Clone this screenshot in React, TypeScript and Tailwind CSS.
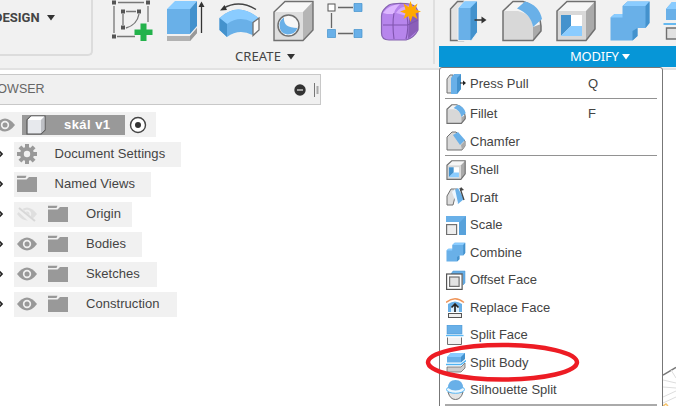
import type { ReactNode } from "react";

const B = "#69b0e8";
const D = "#4492cd";
const L = "#8accff";
const G = "#d8d8d8";
const K = "#707070";

function Tool({ x, w = 54, children }: { x: number; w?: number; children: ReactNode }) {
  return (
    <svg width={w} height="46" viewBox={`${x} 0 ${w} 46`} className="block shrink-0">
      {children}
    </svg>
  );
}

function CreateTools() {
  return (
    <div className="flex h-[46px]">
      <Tool x={105}>
        <path d="M114 6V33M118 2.500H144M148 6V22M117 36.500H135" stroke="#777" strokeWidth="1.3" fill="none" />
        <path d="M123 14V25M126 11.500H136M139 14Q137 25 126 28" stroke="#777" strokeWidth="1.3" fill="none" />
        {[[114, 2.5], [148, 2.5], [114, 36.5], [123, 11.5], [139, 11.5], [123, 27.5]].map(([a, b]) => (
          <rect key={`${a}-${b}`} x={a - 2} y={b - 2} width="4" height="4" fill="#555" />
        ))}
        <path d="M140.500 23.500h6v6h6v5.500h-6v6h-6v-6h-6v-5.500h6z" fill="#23b24b" />
      </Tool>
      <Tool x={159}>
        <path d="M167 36H190L197 28V33L190 41H167Z" fill="#b2b2b2" />
        <path d="M190 36L197 28V33L190 41Z" fill="#999" />
        <path d="M167 9L175 1H197L190 9Z" fill={L} />
        <path d="M190 9L197 1V26L190 34Z" fill={D} />
        <path d="M167 9H190V34H167Z" fill={B} />
        <path d="M201.500 33V5" stroke="#333" strokeWidth="1.3" />
        <path d="M198.500 7L201.500 1.500L204.500 7Z" fill="#333" />
      </Tool>
      <Tool x={213}>
        <path d="M219.500 18Q238 1 258.500 18L252.500 35Q239 28 227 37L219.500 30Z" fill={B} />
        <path d="M219.500 18Q238 1 258.500 18L252.500 22Q239 15 227 24Z" fill={L} />
        <path d="M219.500 18L227 24V37L219.500 30Z" fill={D} />
        <path d="M253 22.500L259 18V30L253 35.500Z" fill="#fafafa" stroke="#707070" strokeWidth="1.3" />
        <path d="M223 8.500Q239 -1 256 9.500" fill="none" stroke="#444" strokeWidth="1.4" />
        <path d="M220 10.500L224.500 5L227 10Z" fill="#333" />
      </Tool>
      <Tool x={267}>
        <path d="M274 12L285 1.500H313L303 12Z" fill="#f7f7f7" />
        <path d="M303 12L313 1.500V30L303 40Z" fill="#b5b5b5" />
        <path d="M274 12H303V40.500H274Z" fill="#dedede" />
        <path d="M274 12L285 1.500H313V30L303 40.500H274Z" fill="none" stroke={K} strokeWidth="1.4" />
        <circle cx="288.500" cy="25.500" r="10.500" fill="#f7f7f7" stroke={K} strokeWidth="1.5" />
        <path d="M284 17.500Q283 28 297.500 28Q295 34.500 287.500 34.500Q279.500 33.500 279.500 25Q279.500 20 284 17.500Z" fill={B} />
      </Tool>
      <Tool x={321}>
        <path d="M331.500 13V28M338 7.500H353M338 33.500H353" stroke="#666" strokeWidth="1.3" />
        <rect x="328" y="4" width="7" height="7" fill="#fff" stroke="#555" />
        <path d="M354 3.500h8v8h-8zM354 29.500h8v8h-8zM327.500 29.500h8v8h-8z" fill={B} stroke={D} strokeWidth=".7" />
      </Tool>
      <Tool x={375}>
        <path d="M381.500 16Q381.500 10 389 5Q393 3 405 3.500Q418 4 418 14V30Q414 38 406 40H389Q381.500 40 381.500 33Z" fill="#b785ec" stroke="#8563b0" strokeWidth="1.2" />
        <path d="M383 13Q388 5 400 4Q394 10 394 14H387Z" fill="#ddb7ff" />
        <path d="M396 13Q400 5 412 6L415 14L407 16Z" fill="#d5aafb" />
        <path d="M409 18L418 11V30L408 39Z" fill="#8a5eb9" />
        <path d="M394 13Q392 24 394 39M383 25H408L418 20M407 16Q409 28 406 39" fill="none" stroke="#8055ae" strokeWidth="1.1" />
        <path d="M410.500 1L412.600 7L417.500 3.500L415.500 9.500L421 11.500L415.500 13.500L417.500 19L412.600 16L410.500 22L408.500 16L403.500 19L405.500 13.500L400 11.500L405.500 9.500L403.500 3.500L408.500 7Z" fill="#ffa900" />
        <circle cx="410.500" cy="11.500" r="4.500" fill="#ffa900" />
      </Tool>
    </div>
  );
}

function ShellArt({ line = 1.5 }: { line?: number }) {
  return (
    <>
      <path d="M2 11L12 1.500H40L31 11Z" fill="#f6f6f6" />
      <path d="M31 11L40 1.500V29L31 40Z" fill="#aaa" />
      <path d="M2 11H31V40H2Z" fill={G} />
      <path d="M2 11L12 1.500H40V29L31 40.500H2Z" fill="none" stroke={K} strokeWidth={line} />
      <path d="M6 15H27V36H6Z" fill="#fff" />
      <path d="M6 15H16V26L6 36Z" fill={D} />
      <path d="M6 36L16 26H27V36Z" fill={L} />
    </>
  );
}

function CombineArt() {
  return (
    <>
      <path d="M1 17.500L5 14H13V6L18 1.500H40V23L36 28H28V36L23 40.500H1Z" fill={B} />
      <path d="M1 17.500L5 14H13V17.500ZM13.500 6L18 1.500H40L36 6Z" fill={L} />
      <path d="M36 6L40 1.500V23L36 28ZM23 31L28 28V36L23 40.500Z" fill={D} />
    </>
  );
}

function PressArt() {
  return (
    <>
      <path d="M2 9L9 1.500H15V40.500H2Z" fill="#e3e3e3" stroke={K} strokeWidth="1.4" />
      <path d="M9.500 8L16 1H29V32L23 40.500H9.500Z" fill={B} stroke="#f0f0f0" strokeWidth="1" />
      <path d="M10 8L16 1.500H28L22 8Z" fill={L} />
      <path d="M22 8L28.500 1.500V32L22 40.500Z" fill={D} />
      <path d="M26 20H35" stroke="#333" strokeWidth="1.5" />
      <path d="M33 16.500L38 20L33 23.500Z" fill="#333" />
    </>
  );
}

function FilletArt({ line = 1.5 }: { line?: number }) {
  return (
    <>
      <path d="M2 11L12 1.500H22Q38 6 40 26V31L32 40.500H2Z" fill="#f4f4f4" />
      <path d="M2 11H17Q31 14 32 27V40.500H2Z" fill={G} />
      <path d="M32 27L40 24V31L32 40.500Z" fill="#aaa" />
      <path d="M2 11L12 1.500H22Q38 6 40 26V31L32 40.500H2Z" fill="none" stroke={K} strokeWidth={line} />
      <path d="M16 8.500L24 1.500Q38 5 41 19L32 27Q30 14 16 8.500Z" fill={B} />
    </>
  );
}

function ModifyTools() {
  return (
    <div className="flex h-[46px] overflow-hidden pl-0.5">
      <Tool x={441}><g transform="translate(448.500 0)"><PressArt /></g></Tool>
      <Tool x={495}><g transform="translate(501 0)"><FilletArt /></g></Tool>
      <Tool x={549}><g transform="translate(555 0)"><ShellArt /></g></Tool>
      <Tool x={603}><g transform="translate(609.500 0)"><CombineArt /></g></Tool>
      <Tool x={657} w={20}>
        <path d="M666 9L672 2H690V20H666Z" fill={B} />
        <path d="M666 9L672 2H690V9Z" fill={L} />
        <path d="M663.500 24H690" stroke="#4daff0" strokeWidth="1.7" />
        <path d="M666.500 28H690V39H666.500Z" fill="#e1e1e1" stroke={K} strokeWidth="1.4" />
      </Tool>
    </div>
  );
}

function Caret({ className }: { className: string }) {
  return <svg width="8" height="6" viewBox="0 0 8 6" className={className}><path d="M0 0H8L4 5.500Z" fill="currentColor" /></svg>;
}

function Eye({ off = false }: { off?: boolean }) {
  return (
    <svg width="20" height="20" viewBox="0 0 20 20" className="block shrink-0">
      <path d="M0 10Q10-3 20 10Q10 23 0 10Z" fill={off ? "#dfdfdf" : "#999"} />
      <circle cx="10" cy="10" r="4.200" fill="#f1f1f1" />
      <circle cx="10" cy="10" r="2.500" fill={off ? "#dfdfdf" : "#999"} />
      {off && <><path d="M1 4L17 19" stroke="#f1f1f1" strokeWidth="5" /><path d="M2 4L18 17" stroke="#d8d8d8" strokeWidth="2" /></>}
    </svg>
  );
}

function Folder() {
  return (
    <svg width="20" height="18" viewBox="0 0 20 18" className="block shrink-0">
      <path d="M0 .800H9.500L8.500 3H0Z" fill="#999" />
      <path d="M0 4.500H9.500L12 2H20V17H0Z" fill="#999" />
    </svg>
  );
}

function Gear() {
  return (
    <svg width="20" height="20" viewBox="0 0 20 20" className="block shrink-0">
      {[0, 45, 90, 135].map((a) => <rect key={a} x="8" y="0" width="4" height="20" fill="#999" transform={`rotate(${a} 10 10)`} />)}
      <circle cx="10" cy="10" r="7" fill="#999" />
      <circle cx="10" cy="10" r="3.200" fill="#f1f1f1" />
    </svg>
  );
}

function Arrow() {
  return <svg width="4" height="8" viewBox="0 0 4 8" className="block shrink-0"><path d="M-1 1L2 4L-1 7" fill="none" stroke="#222" strokeWidth="1.7" /></svg>;
}

function TreeRow({ name, width, kind }: { name: string; width: string; kind: "gear" | "views" | "on" | "off" }) {
  const nested = kind === "on" || kind === "off";
  return (
    <div className="flex h-[30px] items-center">
      <Arrow />
      <div className={`ml-2.5 flex h-[25px] items-center bg-[#f1f1f1] pl-[3px] ${width}`}>
        {kind === "gear" && <Gear />}
        {kind === "views" && <Folder />}
        {nested && <Eye off={kind === "off"} />}
        {nested && <div className="ml-[11px]"><Folder /></div>}
        <span className={`whitespace-nowrap text-[13px] tracking-[0.05px] text-[#444] ${nested ? "ml-[18px]" : "ml-[17.5px]"}`}>{name}</span>
      </div>
    </div>
  );
}

function BrowserPane() {
  return (
    <div className="w-[321px] shrink-0 pt-1">
      <div className="flex h-[31px] items-center border border-l-0 border-[#c8c8c8] bg-[#f0f0f0]">
        <span className="-ml-[20px] w-[63px] text-[12.5px] tracking-[0px] text-[#666]">BROWSER</span>
        <svg width="28" height="16" viewBox="0 0 28 16" className="ml-auto">
          <circle cx="8" cy="8" r="5.700" fill="#333" />
          <path d="M5 8H11" stroke="#d2d2d2" strokeWidth="1.4" />
          <path d="M22.500 1V15" stroke="#777" /><path d="M25.500 4V12" stroke="#aaa" strokeWidth="2" />
        </svg>
      </div>
      <div className="mt-[7px] flex h-[25px] w-[156px] items-center bg-[#f1f1f1]">
        <div className="-ml-[5px]"><Eye /></div>
        <div className="ml-[7px] flex h-5 w-[103px] items-center bg-[#999] pl-1">
          <svg width="20" height="20" viewBox="0 0 20 20" className="block">
            <path d="M1 5L5 1H19V15L15 19H1Z" fill="#e7e9ed" stroke="#555" strokeWidth="1.2" />
            <path d="M1.500 5L5 1.500H18.500L15 5Z" fill="#fff" /><path d="M15 5L18.500 1.500V15L15 18.500Z" fill="#bec0c5" />
          </svg>
          <span className="ml-[18px] whitespace-nowrap text-[13px] font-bold tracking-[0.45px] text-white">skál v1</span>
        </div>
        <svg width="18" height="18" viewBox="0 0 18 18" className="ml-1"><circle cx="9" cy="9" r="7.500" fill="#fff" stroke="#444" strokeWidth="1.4" /><circle cx="9" cy="9" r="3" fill="#333" /></svg>
      </div>
      <div className="mt-0.5">
        <TreeRow name="Document Settings" width="w-[167px]" kind="gear" />
        <TreeRow name="Named Views" width="w-[137px]" kind="views" />
        <TreeRow name="Origin" width="w-[118px]" kind="off" />
        <TreeRow name="Bodies" width="w-[128px]" kind="on" />
        <TreeRow name="Sketches" width="w-[143px]" kind="on" />
        <TreeRow name="Construction" width="w-[163px]" kind="on" />
      </div>
    </div>
  );
}

const icons: Record<string, ReactNode> = {
  "Press Pull": <><path d="M1 5L4 1H7V19H1Z" fill="#ddd" stroke={K} /><path d="M5 4L8 0H15V15L11 20H5Z" fill={B} /><path d="M11 4L15 0V15L11 20Z" fill={D} /><path d="M14 9H18" stroke="#222" /><path d="M17 6.500L20 9L17 11.500Z" fill="#222" /></>,
  Fillet: <g transform="scale(.48)"><FilletArt line={2.4} /></g>,
  Chamfer: <><path d="M1 6L6 1H10L19 10V15L16 19H1Z" fill={G} stroke={K} /><path d="M7 4L12 1L19 9L14 14Z" fill={B} /><path d="M15 14L19 10V15L16 19Z" fill="#aaa" /></>,
  Shell: <g transform="scale(.48)"><ShellArt line={2.4} /></g>,
  Draft: <><path d="M1 9L5 2H11L7 18H1Z" fill="#ddd" stroke={K} /><path d="M7 4L12 1L18 12L12 17Z" fill={B} /><path d="M6 5L9 2L12 16H10Z" fill="#eef7ff" /><path d="M14 1L18 13" stroke="#444" strokeWidth="1.300" /><path d="M14 4L15 0L18 3" fill="#444" /></>,
  Scale: <><path d="M0 1H20V20H13V7H0Z" fill={B} /><path d="M13 8L20 1V20H13Z" fill={D} opacity=".45" /><rect x=".600" y="9.600" width="10" height="10" fill="#eee" stroke={K} strokeWidth="1.200" /></>,
  Combine: <g transform="scale(.48)"><CombineArt /></g>,
  "Offset Face": <><path d="M7 1H19V13L17 15V4H5Z" fill={B} stroke={D} strokeWidth=".500" /><rect x=".600" y="4" width="15.500" height="15.400" fill="white" stroke="#555" strokeWidth="1.200" /><rect x="3.600" y="7" width="9.500" height="9.400" fill="#e2e2e2" stroke={K} strokeWidth="1.200" /></>,
  "Replace Face": <><path d="M0 4.500Q9-3 18 4.500" stroke="#ef965b" fill="none" strokeWidth="1.400" /><path d="M2 6Q9 1 16 6V14H2Z" fill={B} /><path d="M5 14V9L9 5L13 9V14Z" fill="#d9efff" /><path d="M9 14V6M5.500 9.500L9 6L12.500 9.500" stroke="#222" strokeWidth="1.700" fill="none" /><rect x="2.500" y="15.500" width="13" height="4" fill="#eee" stroke="#555" /></>,
  "Split Face": <><path d="M1 0H16V9H1Z" fill={B} stroke={D} strokeWidth=".500" /><path d="M0 10.500H17.500" stroke="#5bb8f4" strokeWidth="1.400" /><path d="M1.500 12.500V19.500H15.500V12.500" fill="#f2f2f2" stroke={K} /></>,
  "Split Body": <><path d="M1 4L5 0H19V5L15 9.500H1Z" fill={B} /><path d="M1 4L5 0H19L15 4Z" fill={L} /><path d="M15 4L19 0V6L15 9.500Z" fill={D} /><path d="M0 11.500H15L20 7.500" stroke="#50b3f2" strokeWidth="1.500" fill="none" /><path d="M1 14H15L19 10V15L15 19H1Z" fill="#cecece" stroke={K} strokeWidth=".800" /></>,
  "Silhouette Split": <><path d="M2 12Q4 19.500 9.500 19.500Q15 19.500 17 12Z" fill="#e4e4e4" stroke={K} /><ellipse cx="9.500" cy="9.500" rx="9" ry="3.800" fill="#eaf7ff" stroke="#58b6f3" /><path d="M2 8Q2 0 9.500 0Q17 0 17 8Q9.500 13 2 8Z" fill={B} /></>,
};

function MenuItem({ name, shortcut }: { name: string; shortcut?: string }) {
  return (
    <div className="flex h-[27.55px] shrink-0 items-center pl-1.5 text-[13px] text-[#444]">
      <svg width="20" height="20" viewBox="0 0 20 20" className="block shrink-0">{icons[name]}</svg>
      <span className="ml-1 w-[118px] whitespace-nowrap">{name}</span>
      {shortcut && <span>{shortcut}</span>}
    </div>
  );
}

function Divider() {
  return <div className="ml-[5px] h-px w-[212px] shrink-0 bg-[#929292]" />;
}

export default function App() {
  return (
    <div className="relative h-[406px] w-[676px] overflow-hidden bg-white font-['Liberation_Sans',Arial,sans-serif]">
      <header className="flex h-[70px] border-b-2 border-[#e2e2e2] bg-[#f1f1f1]">
        <div className="h-[56px] w-[93px] shrink-0 rounded-br-[5px] border-r-2 border-b-2 border-[#dcdcdc] pt-2.5">
          <div className="flex items-center font-['Roboto',sans-serif] text-[13px] leading-[16px] font-bold text-[#444]">
            <span className="-ml-[6px] w-[48px]">DESIGN</span><Caret className="ml-[5px] text-[#333]" />
          </div>
        </div>
        <div className="ml-3 w-[328px] shrink-0">
          <CreateTools />
          <div className="ml-[130px] flex h-[22px] items-center font-['Noto_Sans',sans-serif] text-[13px] text-[#444]">
            <span className="w-[51px] tracking-[0.1px]">CREATE</span><Caret className="ml-[1px] text-[#333]" />
          </div>
        </div>
        <div className="h-16 w-0.5 bg-[#dfdfdf]" />
        <div className="ml-1 w-[237px] shrink-0">
          <ModifyTools />
          <div className="flex h-[21px] items-center bg-[#0696d7] pl-[131px] font-['Noto_Sans',sans-serif] text-[13px] text-white">
            <span className="w-[49px] tracking-[-0.2px]">MODIFY</span><Caret className="ml-[3px]" />
          </div>
        </div>
      </header>
      <main className="flex h-[336px]">
        <BrowserPane />
        <section className="-mt-[3px] ml-[118px] flex h-[345px] w-[224px] shrink-0 flex-col rounded-t-[3px] border border-[#777] bg-white pt-[2.450px]">
          <MenuItem name="Press Pull" shortcut="Q" />
          <Divider />
          <div className="h-px shrink-0" />
          <MenuItem name="Fillet" shortcut="F" />
          <MenuItem name="Chamfer" />
          <Divider />
          <MenuItem name="Shell" />
          <MenuItem name="Draft" />
          <MenuItem name="Scale" />
          <MenuItem name="Combine" />
          <MenuItem name="Offset Face" />
          <MenuItem name="Replace Face" />
          <MenuItem name="Split Face" />
          <MenuItem name="Split Body" />
          <MenuItem name="Silhouette Split" />
          <div className="ml-[5px] h-0.5 w-[212px] shrink-0 bg-[#aaa]" />
        </section>
        <svg width="13" height="336" viewBox="663 70 13 336" className="block shrink-0">
          <path d="M663 375L676 367.500" stroke="#777" strokeWidth="1.500" />
          <path d="M663 380L676 383M663 387L676 388M663 397L676 391M663 403L676 397M671 370L676 378" stroke="#ddd" fill="none" />
          <path d="M663 406L666 404L668 406" stroke="#f6c36c" strokeWidth="1.500" fill="none" />
        </svg>
      </main>
      <svg width="158" height="44" viewBox="0 0 158 44" className="pointer-events-none absolute top-[340px] left-[423px]">
        <ellipse cx="79.500" cy="22.300" rx="74.500" ry="17.300" fill="none" stroke="#ed1c24" strokeWidth="4.500" />
      </svg>
    </div>
  );
}
